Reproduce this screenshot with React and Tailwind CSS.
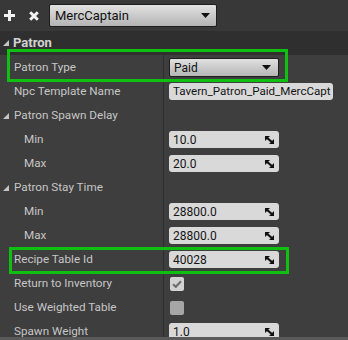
import React from "react";

const Tri = () => (
  <svg width="6" height="6" viewBox="0 0 6 6" className="shrink-0">
    <polygon points="6,0 6,6 0,6" fill="#c4c4c4" />
  </svg>
);

const Spin = () => (
  <svg width="9" height="8" viewBox="0 0 9 8" className="shrink-0">
    <polygon points="0,0 5,0 0,5" fill="#111" />
    <polygon points="9,8 4,8 9,3" fill="#111" />
    <line x1="1" y1="1" x2="8" y2="7" stroke="#111" strokeWidth="2.2" />
  </svg>
);

const Caret = () => (
  <svg width="9" height="5" viewBox="0 0 9 5" className="shrink-0">
    <polygon points="0,0 9,0 4.5,5" fill="#111" />
  </svg>
);

function NumBox({ value }) {
  return (
    <div className="w-[110px] h-[17px] rounded-[3px] bg-[#d9d9d9] flex items-center justify-between pl-[4px] pr-[5px] text-[12px] text-[#151515] leading-none">
      <span>{value}</span>
      <Spin />
    </div>
  );
}

function Row({ label, indent = 14, tri = false, children }) {
  return (
    <div className="flex h-[24px]">
      <div
        className="w-[163px] shrink-0 flex items-center pt-[2px] text-[11.7px] text-[#c6c6c6]"
        style={{ paddingLeft: tri ? 3 : indent }}
      >
        {tri && (
          <span className="mr-[5px] flex items-center">
            <Tri />
          </span>
        )}
        <span className="whitespace-nowrap">{label}</span>
      </div>
      <div className="w-[1px] bg-[#2e2e2e] shrink-0" />
      <div className="flex-1 flex items-center pt-[1px] pl-[5px]">{children}</div>
    </div>
  );
}

export default function App() {
  return (
    <div
      className="relative w-[348px] h-[340px] overflow-hidden bg-[#3e3e3e]"
      style={{ fontFamily: "Roboto, 'Liberation Sans', sans-serif" }}
    >
      {/* toolbar */}
      <div className="h-[31px] bg-[#383838] flex items-center">
        <svg width="11" height="11" viewBox="0 0 11 11" className="ml-[4px]">
          <rect x="4" y="0" width="3" height="11" fill="#f2f2f2" />
          <rect x="0" y="4" width="11" height="3" fill="#f2f2f2" />
        </svg>
        <svg width="10" height="10" viewBox="0 0 10 10" className="ml-[14px]">
          <line x1="1.2" y1="1.2" x2="8.8" y2="8.8" stroke="#f2f2f2" strokeWidth="3" />
          <line x1="8.8" y1="1.2" x2="1.2" y2="8.8" stroke="#f2f2f2" strokeWidth="3" />
        </svg>
        <div className="ml-[10px] w-[168px] h-[23px] rounded-[2px] border border-[#1e1e1e] bg-gradient-to-b from-[#e2e2e2] to-[#b4b4b4] flex items-center justify-between pl-[5px] pr-[6px] text-[13px] text-[#111]">
          <span>MercCaptain</span>
          <Caret />
        </div>
      </div>

      {/* section header */}
      <div className="h-[24px] bg-[#2f2f2f] flex items-center pl-[3px]">
        <span className="mr-[4px] flex items-center">
          <Tri />
        </span>
        <span className="text-[13px] font-bold text-[#d2d2d2]">Patron</span>
      </div>

      <Row label="Patron Type">
        <div className="w-[110px] h-[19px] rounded-[2px] border border-[#1e1e1e] bg-gradient-to-b from-[#e0e0e0] to-[#b6b6b6] flex items-center justify-between pl-[4px] pr-[7px] text-[12px] text-[#111]">
          <span>Paid</span>
          <Caret />
        </div>
      </Row>
      <Row label="Npc Template Name">
        <div className="w-[164px] h-[17px] rounded-[3px] bg-[#d9d9d9] flex items-center pl-[4px] text-[11.6px] text-[#151515] whitespace-nowrap overflow-hidden">
          Tavern_Patron_Paid_MercCapt
        </div>
      </Row>
      <Row label="Patron Spawn Delay" tri />
      <Row label="Min" indent={24}>
        <NumBox value="10.0" />
      </Row>
      <Row label="Max" indent={24}>
        <NumBox value="20.0" />
      </Row>
      <Row label="Patron Stay Time" tri />
      <Row label="Min" indent={24}>
        <NumBox value="28800.0" />
      </Row>
      <Row label="Max" indent={24}>
        <NumBox value="28800.0" />
      </Row>
      <Row label="Recipe Table Id">
        <NumBox value="40028" />
      </Row>
      <Row label="Return to Inventory">
        <div className="ml-[1px] w-[14px] h-[14px] rounded-[2px] bg-[#d2d2d2] flex items-center justify-center">
          <svg width="10" height="8" viewBox="0 0 10 8">
            <polyline points="1,4.2 3.8,6.8 9,1.2" fill="none" stroke="#6e6e6e" strokeWidth="2.2" />
          </svg>
        </div>
      </Row>
      <Row label="Use Weighted Table">
        <div className="ml-[1px] w-[14px] h-[14px] rounded-[2px] bg-[#a6a6a6]" />
      </Row>
      <Row label="Spawn Weight">
        <NumBox value="1.0" />
      </Row>

      {/* bottom strip */}
      <div className="absolute left-0 right-0 top-[337px] h-[3px] bg-[#5a5a5a]" />

      {/* highlight boxes */}
      <div className="absolute left-[7px] top-[49px] w-[281px] h-[33px] border-[3px] border-[#10c010]" />
      <div className="absolute left-[9px] top-[247px] w-[280px] h-[27px] border-[3px] border-[#10c010]" />
    </div>
  );
}
